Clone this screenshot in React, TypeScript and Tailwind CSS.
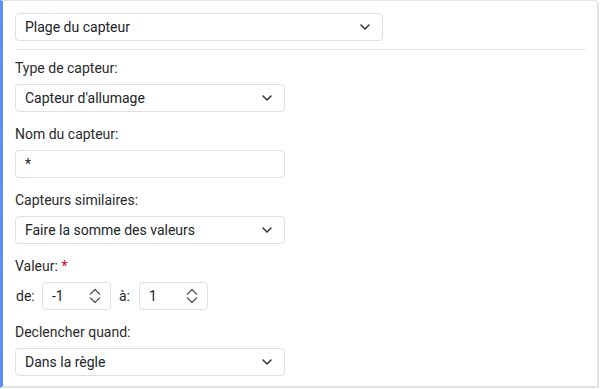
import React from 'react';

const Chevron: React.FC = () => (
  <svg width="10" height="6" viewBox="0 0 10 6" className="shrink-0">
    <path d="M1 1l4 4 4-4" fill="none" stroke="#343a40" strokeWidth="1.6" strokeLinecap="round" strokeLinejoin="round" />
  </svg>
);

const Spinner: React.FC = () => (
  <svg width="12" height="16" viewBox="0 0 12 16" className="shrink-0">
    <path d="M1.5 6l4.5-4.5L10.5 6M1.5 10l4.5 4.5 4.5-4.5" fill="none" stroke="#5f6368" strokeWidth="1.5" strokeLinecap="round" strokeLinejoin="round" />
  </svg>
);

const Select: React.FC<{ value: string; width: string }> = ({ value, width }) => (
  <div className={`${width} h-[28px] flex items-center justify-between pl-[9px] pr-[12px] border border-[#e0e0e0] rounded-[4px] bg-white`}>
    <span className="text-[14px] text-[#212529]">{value}</span>
    <Chevron />
  </div>
);

const Field: React.FC<{ label: React.ReactNode; children: React.ReactNode }> = ({ label, children }) => (
  <div className="flex flex-col">
    <div className="h-[20px] leading-[20px] text-[14px] text-[#2b2b2b] mb-[6px]">{label}</div>
    {children}
  </div>
);

const NumberBox: React.FC<{ value: string }> = ({ value }) => (
  <div className="w-[69px] h-[28px] flex items-center justify-between pl-[9px] pr-[9px] border border-[#e0e0e0] rounded-[4px]">
    <span className="text-[14px] text-[#212529]">{value}</span>
    <Spinner />
  </div>
);

const App: React.FC = () => {
  return (
    <div className="w-[600px] h-[389px] bg-white" style={{ fontFamily: 'Roboto, "Liberation Sans", sans-serif' }}>
      <div className="w-[599px] h-[388px] border-l-[3px] border-l-[#5b8ff9] border-t border-r-2 border-b-2 border-t-[#e6e6e6] border-r-[#e2e2e2] border-b-[#e2e2e2] rounded-tr-[5px] pl-[12px] pt-[12px] pr-[11px]">
        <Select value="Plage du capteur" width="w-[368px]" />
        <div className="h-px bg-[#e6e6e6] mt-[8px] mb-[8px]" />
        <div className="flex flex-col gap-[12px]">
          <Field label="Type de capteur:">
            <Select value="Capteur d'allumage" width="w-[270px]" />
          </Field>
          <Field label="Nom du capteur:">
            <div className="w-[270px] h-[28px] flex items-center pl-[9px] border border-[#e0e0e0] rounded-[4px] text-[14px] text-[#212529]">*</div>
          </Field>
          <Field label="Capteurs similaires:">
            <Select value="Faire la somme des valeurs" width="w-[270px]" />
          </Field>
          <Field label={<>Valeur: <span className="text-[#d0021b]">*</span></>}>
            <div className="flex items-center text-[14px] text-[#2b2b2b]">
              <span className="w-[27px] pl-px">de:</span>
              <NumberBox value="-1" />
              <span className="w-[28px] pl-[8px]">à:</span>
              <NumberBox value="1" />
            </div>
          </Field>
          <Field label="Declencher quand:">
            <Select value="Dans la règle" width="w-[270px]" />
          </Field>
        </div>
      </div>
    </div>
  );
};

export default App;
